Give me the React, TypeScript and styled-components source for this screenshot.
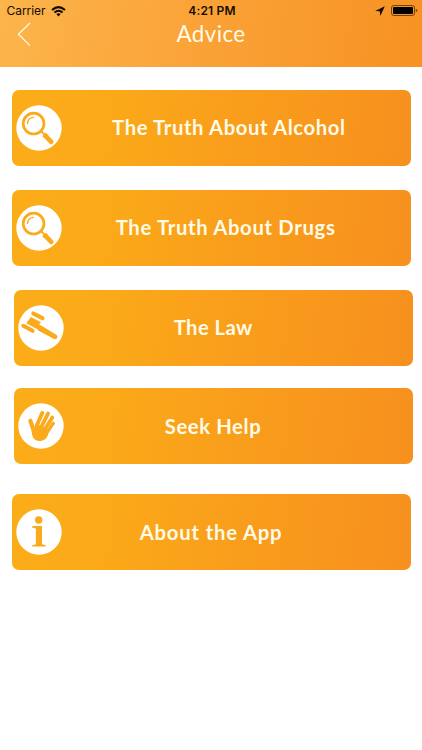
import React from 'react';
import styled, { createGlobalStyle } from 'styled-components';

const GlobalStyle = createGlobalStyle`
  * { box-sizing: border-box; }
  body { margin: 0; background: #fff; }
`;

const Screen = styled.div`
  width: 422px;
  height: 750px;
  overflow: hidden;
  background: #fff;
  font-family: Lato, 'Open Sans', sans-serif;
`;

const Header = styled.header`
  height: 67.4px;
  background: linear-gradient(97deg, #fcb54b 0%, #faa237 48%, #f79223 100%);
`;

const StatusBar = styled.div`
  display: grid;
  grid-template-columns: 1fr auto 1fr;
  align-items: center;
  height: 22px;
  padding: 0 4.5px 0 6.5px;
  color: #160c02;
  font: 400 12px/22px Inter, sans-serif;
`;

const Carrier = styled.div`
  display: flex;
  align-items: center;
  gap: 6px;
  letter-spacing: -0.05px;
`;

const Clock = styled.div`
  font-weight: 600;
  letter-spacing: 0.2px;
`;

const Indicators = styled.div`
  display: flex;
  align-items: center;
  justify-content: flex-end;
  gap: 6px;
  padding-bottom: 1px;
`;

const NavBar = styled.nav`
  display: grid;
  grid-template-columns: 46px 1fr 46px;
  height: 28px;
`;

const BackButton = styled.button`
  display: flex;
  padding: 0 0 0 17px;
  border: 0;
  background: none;
`;

const Title = styled.h1`
  margin: 0;
  color: #fffbe6;
  font-size: 22.3px;
  font-weight: 400;
  line-height: 24px;
  letter-spacing: 0.4px;
  text-align: center;
`;

const Menu = styled.main`
  display: flex;
  flex-direction: column;
  padding: 22.8px 0 0 11.7px;
`;

const MenuButton = styled.button<{ $gap: number; $indent?: number }>`
  display: flex;
  align-items: center;
  width: 399.3px;
  height: 76px;
  margin: 0 0 ${(p) => p.$gap}px ${(p) => p.$indent ?? 0}px;
  padding: 0 0 0 4px;
  border: 0;
  border-radius: 7px;
  background: linear-gradient(97deg, #fbad18 0%, #fba919 24%, #f99d1c 58%, #f7901e 100%);
  font-family: inherit;
`;

const Label = styled.span<{ $start: number; $spacing: number; $lift: number }>`
  margin-left: ${(p) => p.$start}px;
  padding-bottom: ${(p) => p.$lift}px;
  color: #fffbe6;
  font-size: 20.3px;
  font-weight: 700;
  line-height: 28px;
  letter-spacing: ${(p) => p.$spacing}px;
  white-space: nowrap;
`;

const Badge = styled.svg`
  flex: none;
  width: 46px;
  height: 46px;
`;

const ORANGE = '#faaa1b';

const MagnifierIcon = () => (
  <g fill="none" stroke={ORANGE}>
    <circle cx="17.6" cy="18.6" r="10.4" strokeWidth="2.7" />
    <path d="M11.5 18.6C11.6 15 14.1 12.7 17.5 12.4" strokeWidth="1.4" strokeLinecap="round" />
    <path d="M25 26L28.3 29.4" strokeWidth="1.9" />
    <path d="M28 29.4L30 31.4" strokeWidth="5" />
    <path d="M29.5 30.9L35.2 36.8" strokeWidth="4.7" strokeLinecap="round" />
  </g>
);

const GavelIcon = () => (
  <g fill={ORANGE} stroke={ORANGE} strokeLinecap="round">
    <path d="M15.3 8.5L24.5 13.2" strokeWidth="4.1" />
    <path d="M5.3 20.8L14.6 25.8" strokeWidth="4.1" />
    <path d="M12.9 11.9L23 17.2L18.2 23.7L8.3 18.3Z" stroke="none" />
    <path d="M20.3 19.4L23.2 20.6L38.6 30Q40.1 31.2 39.2 33.1Q38 34.8 36 33.9L20.3 25.6L17.9 22.8Z" stroke="none" />
  </g>
);

const HandIcon = () => (
  <g fill={ORANGE} stroke={ORANGE} strokeLinecap="round">
    <path d="M12.4 17.8L14.8 25" strokeWidth="4.1" />
    <path d="M24.2 9.9L18.6 23" strokeWidth="3.9" />
    <path d="M30 10.6L23.3 24" strokeWidth="3.9" />
    <path d="M34.3 14.4L27 26" strokeWidth="3.7" />
    <path d="M35.2 20.4L29.2 29" strokeWidth="3.4" />
    <path
      d="M12.8 24.2L17 24L18 20.5L30.8 26.5C30.8 32.8 28.2 36.8 23.6 37.7C18.5 38.7 15.2 36.2 14.2 32Z"
      stroke="none"
    />
  </g>
);

const InfoIcon = () => (
  <g fill={ORANGE}>
    <circle cx="22.7" cy="11" r="3.7" />
    <path d="M16.3 17H26V34Q26 35.7 27.5 35.8L29.6 36V37.6H16.3V36L18.4 35.8Q19.9 35.7 19.9 34.2V20.7Q19.9 19.2 18.4 19L16.3 18.8Z" />
  </g>
);

const items = [
  { text: 'The Truth About Alcohol', Icon: MagnifierIcon, gap: 24, indent: 0, start: 50.4, spacing: 0.6, lift: 2 },
  { text: 'The Truth About Drugs', Icon: MagnifierIcon, gap: 23.6, indent: 0, start: 54, spacing: 0.66, lift: 2 },
  { text: 'The Law', Icon: GavelIcon, gap: 22.7, indent: 2, start: 110, spacing: 0.4, lift: 2 },
  { text: 'Seek Help', Icon: HandIcon, gap: 29.9, indent: 2, start: 101, spacing: 0.6, lift: 0 },
  { text: 'About the App', Icon: InfoIcon, gap: 0, indent: 0, start: 78, spacing: 0.8, lift: 0 },
];

export default function App() {
  return (
    <Screen>
      <GlobalStyle />
      <Header>
        <StatusBar>
          <Carrier>
            Carrier
            <svg width="15" height="11" viewBox="0 0 15 11" fill="none" stroke="#120a02" strokeWidth="2">
              <path d="M1 4.1Q7.5 -1.8 14 4.1" />
              <path d="M3.4 6.6Q7.5 2.9 11.6 6.6" />
              <path d="M5.3 8.1Q7.5 6.2 9.7 8.1L7.5 10.4Z" fill="#120a02" stroke="none" />
            </svg>
          </Carrier>
          <Clock>4:21 PM</Clock>
          <Indicators>
            <svg width="10" height="10" viewBox="0 0 10 10">
              <path d="M9.8 0.2L0.2 4.9L4.8 5.3L5.3 9.9Z" fill="#120a02" />
            </svg>
            <svg width="27" height="11" viewBox="0 0 27 11">
              <rect x="0.5" y="0.5" width="23" height="10" rx="2.3" fill="none" stroke="#704214" />
              <rect x="2" y="2" width="20" height="7" rx="0.8" fill="#000" />
              <path d="M24.8 3.7Q26.3 4.2 26.3 5.5T24.8 7.3Z" fill="#704214" />
            </svg>
          </Indicators>
        </StatusBar>
        <NavBar>
          <BackButton aria-label="Back">
            <svg width="14" height="25" viewBox="0 0 14 25" fill="none">
              <path d="M13 1L1.4 12.3L13 23.6" stroke="#fffbe6" strokeWidth="1.25" />
            </svg>
          </BackButton>
          <Title>Advice</Title>
        </NavBar>
      </Header>
      <Menu>
        {items.map(({ text, Icon, gap, indent, start, spacing, lift }) => (
          <MenuButton key={text} $gap={gap} $indent={indent}>
            <Badge viewBox="0 0 46 46" aria-hidden="true">
              <circle cx="23" cy="23" r="22.7" fill="#fff" />
              <Icon />
            </Badge>
            <Label $start={start} $spacing={spacing} $lift={lift}>{text}</Label>
          </MenuButton>
        ))}
      </Menu>
    </Screen>
  );
}
